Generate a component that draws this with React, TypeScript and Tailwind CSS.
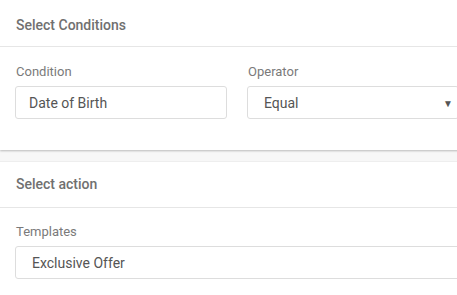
import React from "react";

function Label({ children }: { children: React.ReactNode }) {
  return <div className="text-[13px] leading-4 text-[#7a7a7a] pl-px">{children}</div>;
}

export default function App() {
  return (
    <div className="w-[457px] h-[295px] overflow-hidden bg-[#f7f7f7]" style={{ fontFamily: "Roboto, 'Liberation Sans', sans-serif" }}>
      <div className="w-[480px]">
        <div className="bg-white h-[150px] shadow-[0_1px_2px_rgba(0,0,0,0.25)]">
          <div className="h-[47px] border-b border-[#e6e6e6] px-4 pt-[3px] flex items-center">
            <span className="text-[14px] font-medium text-[#707070] leading-none">Select Conditions</span>
          </div>
          <div className="px-[15px] pt-[17px] grid grid-cols-[212px_212px] gap-x-5">
            <div className="flex flex-col gap-[6px]">
              <Label>Condition</Label>
              <div className="h-[33px] border border-[#dddddd] rounded-[3px] flex items-center pl-[13px] pt-px text-[14px] text-[#555555]">
                Date of Birth
              </div>
            </div>
            <div className="flex flex-col gap-[6px]">
              <Label>Operator</Label>
              <div className="h-[33px] border border-[#dddddd] rounded-[3px] flex items-center justify-between pl-[16px] pr-[5px] pt-px text-[14px] text-[#555555]">
                <span>Equal</span>
                <span className="text-[10px] text-[#555555]">▼</span>
              </div>
            </div>
          </div>
        </div>
        <div className="mt-[11px] bg-white h-[140px] border-t border-[#eeeeee]">
          <div className="h-[46px] border-b border-[#e6e6e6] px-4 pb-[2px] flex items-center">
            <span className="text-[14px] font-medium text-[#707070] leading-none">Select action</span>
          </div>
          <div className="px-[15px] pt-[16px] flex flex-col gap-[6px]">
            <Label>Templates</Label>
            <div className="h-[33px] w-[460px] border border-[#dddddd] rounded-[3px] flex items-center pl-[16px] pt-px text-[14px] text-[#555555]">
              Exclusive Offer
            </div>
          </div>
        </div>
      </div>
    </div>
  );
}
